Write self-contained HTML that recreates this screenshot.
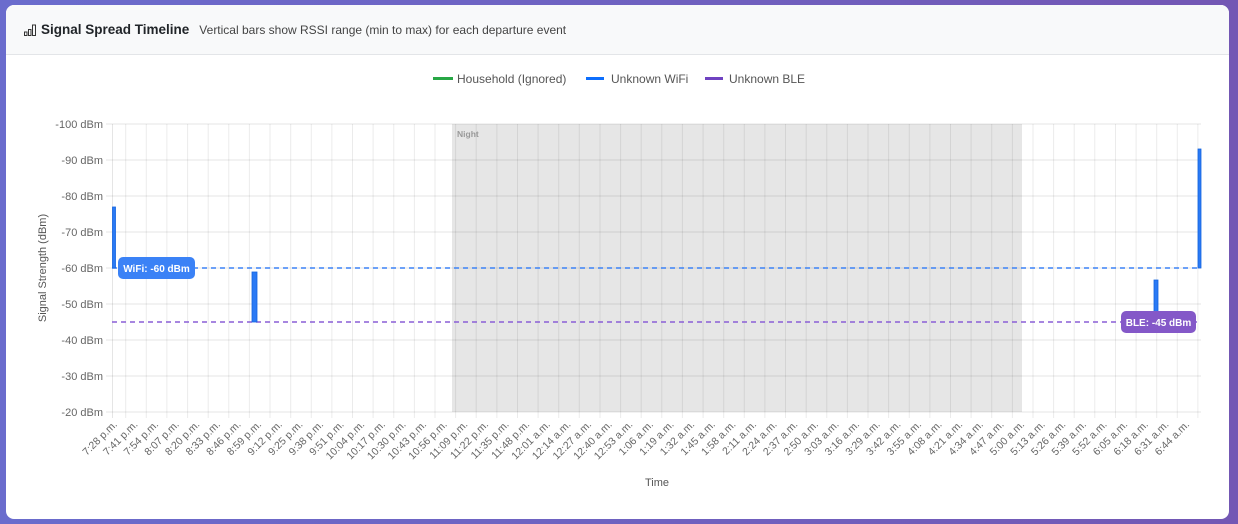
<!DOCTYPE html><html><head><meta charset="utf-8"><style>
body{margin:0;width:1238px;height:524px;background:linear-gradient(90deg,#6a6ccd,#7357b4);font-family:"Liberation Sans",sans-serif;overflow:hidden}
.card{position:absolute;left:6px;top:5px;width:1223px;height:514px;background:#fff;border-radius:8px;overflow:hidden}
.hd{height:49px;background:#f8f9fa;border-bottom:1px solid #e3e5e8;display:flex;align-items:center;padding-left:18px}
.hd b{font-size:13.5px;color:#212529;margin-left:4px}
.hd span{font-size:12px;color:#444;margin-left:10px}
svg{position:absolute;left:0;top:0}
</style></head><body>
<div class="card"><div class="hd"><svg style="position:static" width="13" height="12" viewBox="0 0 13 12"><rect x="0.5" y="8" width="2.5" height="3.5" fill="none" stroke="#333"/><rect x="4.5" y="5.5" width="2.5" height="6" fill="none" stroke="#333"/><rect x="8.5" y="1" width="3" height="10.5" fill="none" stroke="#333"/></svg><b>Signal Spread Timeline</b><span>Vertical bars show RSSI range (min to max) for each departure event</span></div></div>
<svg width="1238" height="524" id="c" font-family="Liberation Sans, sans-serif"></svg>
<script>
var s='';
s+='<rect x="433" y="77" width="20" height="3" fill="#28a745"/><text x="457" y="83" font-size="12" fill="#555">Household (Ignored)</text>';
s+='<rect x="586" y="77" width="18" height="3" fill="#0d6efd"/><text x="611" y="83" font-size="12" fill="#555">Unknown WiFi</text>';
s+='<rect x="705" y="77" width="18" height="3" fill="#6f42c1"/><text x="729" y="83" font-size="12" fill="#555">Unknown BLE</text>';
s+='<rect x="452" y="124" width="570" height="288" fill="#e6e6e6"/>';
s+='<text x="457" y="137" font-size="8.5" font-weight="bold" fill="#999">Night</text>';
var yl=[-100,-90,-80,-70,-60,-50,-40,-30,-20];
for(var i=0;i<9;i++){var y=124+36*i;s+='<line x1="106" x2="1201" y1="'+y+'" y2="'+y+'" stroke="#000" stroke-opacity=".1"/><text x="103" y="'+(y+4)+'" font-size="11" text-anchor="end" fill="#666">'+yl[i]+' dBm</text>';}
var t="7:28,7:41,7:54,8:07,8:20,8:33,8:46,8:59,9:12,9:25,9:38,9:51,10:04,10:17,10:30,10:43,10:56,11:09,11:22,11:35,11:48".split(',').map(function(a){return a+' p.m.'}).concat("12:01,12:14,12:27,12:40,12:53,1:06,1:19,1:32,1:45,1:58,2:11,2:24,2:37,2:50,3:03,3:16,3:29,3:42,3:55,4:08,4:21,4:34,4:47,5:00,5:13,5:26,5:39,5:52,6:05,6:18,6:31,6:44".split(',').map(function(a){return a+' a.m.'}));
s+='<line x1="112.5" x2="112.5" y1="124" y2="418" stroke="#000" stroke-opacity=".1"/>';
for(var i=0;i<t.length;i++){var x=(125.7+20.62*i).toFixed(1);s+='<line x1="'+x+'" x2="'+x+'" y1="124" y2="418" stroke="#000" stroke-opacity=".08"/><text transform="translate('+(x-8)+',425) rotate(-45)" font-size="10.5" text-anchor="end" fill="#666">'+t[i]+'</text>';}
s+='<text transform="translate(46,268) rotate(-90)" font-size="11" text-anchor="middle" fill="#555">Signal Strength (dBm)</text>';
s+='<text x="657" y="486" font-size="11" text-anchor="middle" fill="#555">Time</text>';
s+='<line x1="112" x2="1201" y1="268" y2="268" stroke="#3b82f6" stroke-width="1.6" stroke-dasharray="5,4"/>';
s+='<line x1="112" x2="1201" y1="322" y2="322" stroke="#8a5fd6" stroke-width="1.6" stroke-dasharray="5,4"/>';
s+='<rect x="112.5" y="207" width="3" height="61" fill="#2a7af5" stroke="#1565e0" stroke-width=".8"/>';
s+='<rect x="252" y="272" width="5" height="50" fill="#2a7af5" stroke="#1565e0" stroke-width=".8"/>';
s+='<rect x="1154" y="280" width="4" height="42" fill="#2a7af5" stroke="#1565e0" stroke-width=".8"/>';
s+='<rect x="1198" y="149" width="3" height="119" fill="#2a7af5" stroke="#1565e0" stroke-width=".8"/>';
s+='<rect x="118" y="257" width="77" height="22" rx="5" fill="#3b82f6"/><text x="156.5" y="272" font-size="10" font-weight="bold" fill="#fff" text-anchor="middle">WiFi: -60 dBm</text>';
s+='<rect x="1121" y="311" width="75" height="22" rx="5" fill="#8458c8"/><text x="1158.5" y="326" font-size="10" font-weight="bold" fill="#fff" text-anchor="middle">BLE: -45 dBm</text>';
document.getElementById('c').innerHTML=s;
</script></body></html>
